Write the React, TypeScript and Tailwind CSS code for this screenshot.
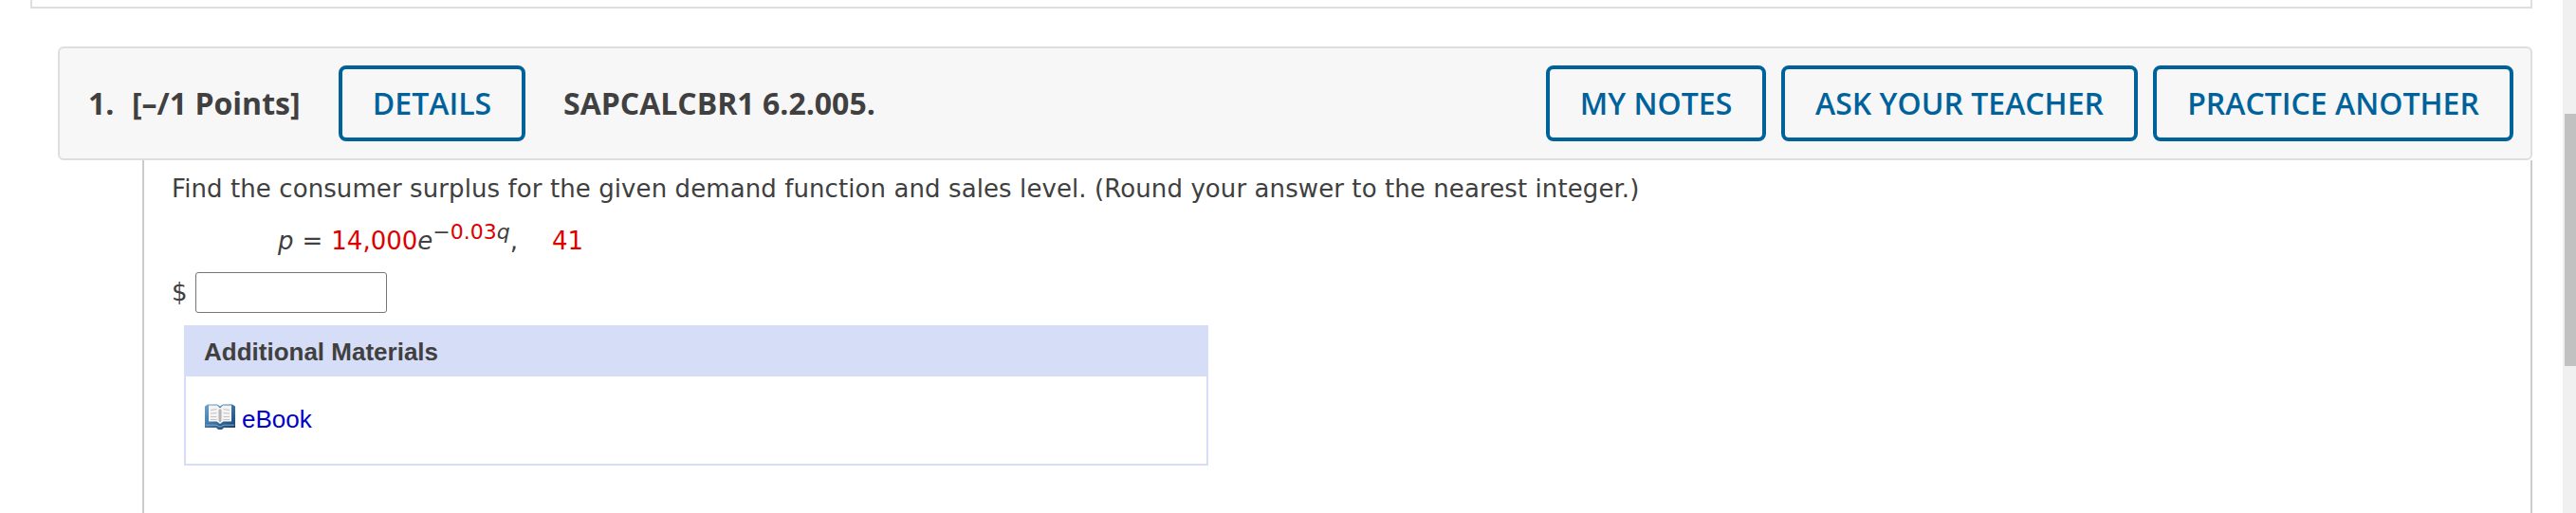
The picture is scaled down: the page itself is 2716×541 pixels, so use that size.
import type { ReactNode } from 'react'

function HeaderButton({ className, children }: { className: string; children: ReactNode }) {
  return (
    <button
      className={`h-20 shrink-0 rounded-lg border-4 border-[#00629b] text-center text-[32px] font-semibold whitespace-nowrap text-[#00629b] ${className}`}
    >
      {children}
    </button>
  )
}

function BookIcon() {
  return (
    <svg width="32" height="28" viewBox="0 0 32 28" className="shrink-0">
      <defs>
        <linearGradient id="cover" x1="0" y1="0" x2="1" y2="1">
          <stop offset="0" stopColor="#6fa3cb" />
          <stop offset="0.5" stopColor="#3b74a5" />
          <stop offset="1" stopColor="#123f6b" />
        </linearGradient>
      </defs>
      <path d="M0 3.5 3 1.5h10l3 2 3-2h10l3 2V26H20l-2 2h-4l-2-2H0Z" fill="url(#cover)" />
      <path d="M1 23.2h11l4 2 4-2h11" fill="none" stroke="#7fa9cb" strokeWidth="1" />
      <path d="M4 2.5h9l3 3 3-3h9v17h-8.500L16 22l-3.500-2.500H4Z" fill="#f4f4f4" />
      <path d="M14.500 7.500 16 6l1.500 1.500V19L16 20.500 14.500 19Z" fill="#b5b5b5" />
      <path d="M6 7.500 12.500 6.500M6 11l6.500-.5M6 14.500h6.500M6 17.500h6.500M19.500 6.500 26 7.500M19.500 10.500 26 11M19.500 14.500H26M19.500 17.500H26" stroke="#c4c4c4" strokeWidth="1.200" />
    </svg>
  )
}

function QuestionHeader() {
  return (
    <header className="ml-[61px] flex h-[120px] items-center rounded-md border-2 border-[#dedede] bg-[#f7f7f7] pr-[18px] pl-[30px] font-['Open_Sans',sans-serif] text-[32px] text-[#404040]">
      <span className="w-[46px] font-bold">1.</span>
      <span className="w-[218px] font-bold whitespace-nowrap">[–/1 Points]</span>
      <HeaderButton className="w-[197px]">DETAILS</HeaderButton>
      <span className="ml-10 font-bold whitespace-nowrap">SAPCALCBR1 6.2.005.</span>
      <div className="ml-auto flex gap-4">
        <HeaderButton className="w-[232px]">MY NOTES</HeaderButton>
        <HeaderButton className="w-[376px]">ASK YOUR TEACHER</HeaderButton>
        <HeaderButton className="w-[380px]">PRACTICE ANOTHER</HeaderButton>
      </div>
    </header>
  )
}

function AdditionalMaterials() {
  return (
    <section className="mt-[13px] ml-[13px] h-[148px] w-[1080px] border-2 border-[#d6ddf7] font-['Liberation_Sans',Arial,sans-serif] text-[26px]">
      <h3 className="flex h-[52px] items-center bg-[#d6ddf7] pl-[19px] font-bold text-[#404040]">
        Additional Materials
      </h3>
      <a className="flex items-start gap-[7px] pt-7 pl-5 text-[#0000c8]">
        <BookIcon />
        <span className="leading-[34px]">eBook</span>
      </a>
    </section>
  )
}

function App() {
  return (
    <div className="flex h-[541px] w-full overflow-hidden bg-white">
      <main className="flex w-[2670px] shrink-0 flex-col">
        <div className="mb-10 ml-8 h-[9px] shrink-0 border-2 border-t-0 border-[#dedede]" />
        <QuestionHeader />
        <div className="ml-[150px] flex-1 border-x-2 border-[#ccc] pl-[29px] font-['DejaVu_Sans',Verdana,sans-serif] text-[26px] text-[#404040]">
          <p className="mt-[14px] leading-8 tracking-[0.09px] whitespace-nowrap">
            Find the consumer surplus for the given demand function and sales level. (Round your answer to the nearest integer.)
          </p>
          <div className="mt-[23px] ml-28 flex h-8 items-start leading-8 whitespace-nowrap">
            <i>p</i>
            <span className="mx-[9px]">=</span>
            <span className="text-[#dd0000]">14,000</span>
            <i>e</i>
            <span className="-mt-[9px] text-[22px]">
              −<span className="text-[#dd0000]">0.03</span>
              <i>q</i>
            </span>
            <span>,</span>
            <span className="ml-9 text-[#dd0000]">41</span>
          </div>
          <div className="mt-[17px] flex h-[43px] items-center">
            <span className="w-[25px]">$</span>
            <input className="h-[43px] w-[202px] rounded-[3px] border border-[#767676] bg-white" />
          </div>
          <AdditionalMaterials />
        </div>
      </main>
      <div className="ml-8 w-[14px] shrink-0 bg-[#f0f0f0] pt-[120px] pl-0.5">
        <div className="h-[266px] bg-[#c1c1c1]" />
      </div>
    </div>
  )
}

export default App
